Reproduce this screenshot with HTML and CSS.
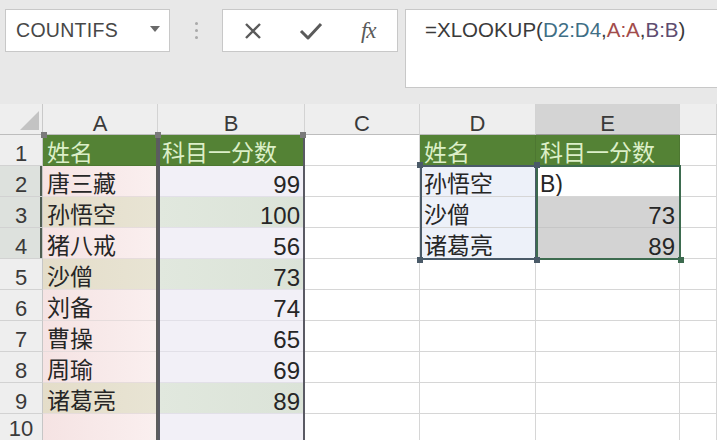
FILE: index.html
```html
<!DOCTYPE html>
<html lang="zh-CN">
<head>
<meta charset="utf-8">
<title>XLOOKUP</title>
<link rel="stylesheet" href="styles.css">
</head>
<body>
<div class="app">
  <div class="toolbar">
    <div class="namebox"><span class="nb-text">COUNTIFS</span><span class="caret"></span></div>
    <div class="dots"><i></i><i></i><i></i></div>
    <div class="btns">
      <div class="btn">
        <svg width="20" height="16" viewBox="0 0 20 16"><path d="M3 1 L17 15 M17 1 L3 15" stroke="#5a5a5a" stroke-width="2.4" fill="none"/></svg>
      </div>
      <div class="btn">
        <svg width="24" height="18" viewBox="0 0 24 18"><path d="M2 9 L9 16 L22 2" stroke="#5a5a5a" stroke-width="3" fill="none" stroke-linejoin="round"/></svg>
      </div>
      <div class="btn fx"><span class="fxt">fx</span></div>
    </div>
    <div class="formula">=XLOOKUP(<span class="r-d">D2:D4</span>,<span class="r-a">A:A</span>,<span class="r-b">B:B</span>)</div>
  </div>

  <div class="sheet">
    <div class="grid">
      <div class="c corner"><div class="tri"></div></div>
      <div class="c ch">A</div>
      <div class="c ch">B</div>
      <div class="c ch">C</div>
      <div class="c ch">D</div>
      <div class="c ch sel">E</div>
      <div class="c ch"></div>

      <div class="c rh">1</div>
      <div class="c hd">姓名</div>
      <div class="c hd">科目一分数</div>
      <div class="c"></div>
      <div class="c hd">姓名</div>
      <div class="c hd">科目一分数</div>
      <div class="c"></div>

      <div class="c rh rsel">2</div>
      <div class="c pk">唐三藏</div>
      <div class="c lv num">99</div>
      <div class="c"></div>
      <div class="c bl">孙悟空</div>
      <div class="c edit">B)</div>
      <div class="c"></div>

      <div class="c rh rsel">3</div>
      <div class="c tn">孙悟空</div>
      <div class="c gn num">100</div>
      <div class="c"></div>
      <div class="c bl">沙僧</div>
      <div class="c gy num">73</div>
      <div class="c"></div>

      <div class="c rh rsel">4</div>
      <div class="c pk">猪八戒</div>
      <div class="c lv num">56</div>
      <div class="c"></div>
      <div class="c bl">诸葛亮</div>
      <div class="c gy num">89</div>
      <div class="c"></div>

      <div class="c rh">5</div>
      <div class="c tn">沙僧</div>
      <div class="c gn num">73</div>
      <div class="c"></div>
      <div class="c"></div>
      <div class="c"></div>
      <div class="c"></div>

      <div class="c rh">6</div>
      <div class="c pk">刘备</div>
      <div class="c lv num">74</div>
      <div class="c"></div>
      <div class="c"></div>
      <div class="c"></div>
      <div class="c"></div>

      <div class="c rh">7</div>
      <div class="c pk">曹操</div>
      <div class="c lv num">65</div>
      <div class="c"></div>
      <div class="c"></div>
      <div class="c"></div>
      <div class="c"></div>

      <div class="c rh">8</div>
      <div class="c pk">周瑜</div>
      <div class="c lv num">69</div>
      <div class="c"></div>
      <div class="c"></div>
      <div class="c"></div>
      <div class="c"></div>

      <div class="c rh">9</div>
      <div class="c tn">诸葛亮</div>
      <div class="c gn num">89</div>
      <div class="c"></div>
      <div class="c"></div>
      <div class="c"></div>
      <div class="c"></div>

      <div class="c rh last">10</div>
      <div class="c pk"></div>
      <div class="c lv"></div>
      <div class="c"></div>
      <div class="c"></div>
      <div class="c"></div>
      <div class="c"></div>
    </div>

    <div class="rng rng-a"></div>
    <div class="rng rng-b"></div>
    <div class="rng rng-d"></div>
    <div class="rng rng-e"></div>

    <div class="hdl hdl-g h-a1"></div>
    <div class="hdl hdl-g h-a2"></div>
    <div class="hdl hdl-g h-b2"></div>
    <div class="hdl hdl-d h-d1"></div>
    <div class="hdl hdl-d h-d2"></div>
    <div class="hdl hdl-d h-d3"></div>
    <div class="hdl hdl-d h-d4"></div>
    <div class="hdl hdl-e h-e1"></div>
  </div>
</div>
</body>
</html>
```

FILE: styles.css
```css
* { box-sizing: border-box; }
html, body { margin: 0; padding: 0; }
body {
  width: 717px;
  height: 440px;
  overflow: hidden;
  background: #e8e8e8;
  font-family: "Liberation Sans", "Noto Sans CJK SC", sans-serif;
}
.app { width: 717px; height: 440px; overflow: hidden; }

/* toolbar */
.toolbar {
  height: 104px;
  display: flex;
  align-items: flex-start;
  padding: 9px 0 0 5px;
  background: #e8e8e8;
}
.namebox {
  width: 165px;
  height: 43px;
  background: #fff;
  border: 1px solid #c8c8c8;
  display: flex;
  align-items: center;
  justify-content: space-between;
  padding: 0 9px 0 10px;
}
.nb-text { font-size: 19.5px; color: #474747; letter-spacing: 0.3px; }
.caret {
  width: 0; height: 0;
  border-left: 5px solid transparent;
  border-right: 5px solid transparent;
  border-top: 6px solid #6a6a6a;
  margin-bottom: 3px;
}
.dots {
  width: 52px;
  height: 43px;
  display: flex;
  flex-direction: column;
  align-items: center;
  justify-content: center;
  gap: 4px;
}
.dots i { display: block; width: 3px; height: 3px; border-radius: 50%; background: #a9a9a9; }
.btns {
  width: 176px;
  height: 43px;
  background: #fff;
  border: 1px solid #c8c8c8;
  display: flex;
  padding-left: 1px;
}
.btn { width: 58px; display: flex; align-items: center; justify-content: center; }
.fx { font-family: "Liberation Serif", serif; font-style: italic; color: #5a5a5a; padding-top: 1px; }
.fxt { font-size: 23px; letter-spacing: -1px; }
.formula {
  flex: 1;
  margin-left: 7px;
  height: 79px;
  background: #fff;
  border: 1px solid #c8c8c8;
  border-right: none;
  padding: 7px 0 0 19px;
  font-size: 20.5px;
  line-height: 26px;
  color: #3a3a3a;
  white-space: nowrap;
}
.r-d { color: #3f6f86; }
.r-a { color: #a24c4c; }
.r-b { color: #5e4d70; }

/* sheet */
.sheet { position: relative; height: 336px; overflow: hidden; background: #fff; }
.grid {
  display: grid;
  grid-template-columns: 43px 115px 147px 115px 116px 144px 37px;
  grid-auto-rows: 31px;
}
.c {
  border-right: 1px solid #d6d6d6;
  border-bottom: 1px solid #d6d6d6;
  font-size: 23px;
  line-height: 31px;
  padding: 3px 4px 0 4px;
  color: #262626;
  white-space: nowrap;
  overflow: hidden;
  background: #fff;
}
.num { text-align: right; font-size: 24px; }
.corner {
  background: #eeeeee;
  border-right: 1px solid #c9c9c9;
  border-bottom: 1px solid #bdbdbd;
  display: flex;
  justify-content: flex-end;
  align-items: flex-end;
  padding: 0 3px 4px 0;
}
.tri { width: 19px; height: 19px; background: #c3c3c3; clip-path: polygon(100% 0, 100% 100%, 0 100%); }
.ch {
  background: #eeeeee;
  border-right: 1px solid #d3d3d3;
  border-bottom: 1px solid #bdbdbd;
  text-align: center;
  font-size: 22px;
  color: #3a3a3a;
  padding-top: 4px;
}
.ch.sel { background: #d4d4d4; border-bottom-color: #9a9a9a; }
.rh {
  background: #eeeeee;
  border-right: 1px solid #c6c6c6;
  border-bottom: 1px solid #d2d2d2;
  text-align: center;
  font-size: 22px;
  color: #3a3a3a;
  padding: 3px 0 0 0;
}
.rh.last { line-height: 26px; padding-top: 2px; }
.rh.rsel { background: #dde1dd; box-shadow: inset -2px 0 0 #4f5d52; }
.hd {
  background: #548235;
  color: #dcefc8;
  border-right-color: #4d7731;
  border-bottom-color: #4d7731;
}
.pk { background: linear-gradient(to right, #f5e3e3, #faefef); border-bottom-color: #e6dcdc; }
.tn { background: linear-gradient(to right, #e4ddc9, #e8e4d4); border-bottom-color: #e6dcdc; }
.lv { background: #f2f0f7; border-bottom-color: #e2e0e8; }
.gn { background: linear-gradient(to right, #e1e8de, #dbe3d8); border-bottom-color: #e2e0e8; }
.bl { background: #edf1f9; }
.gy { background: #d3d3d3; border-bottom-color: #c6c6c6; }
.edit { color: #262626; }

/* reference range outlines (overlay) */
.rng { position: absolute; pointer-events: none; }
.rng-a { left: 43px; top: 31px; width: 115px; height: 305px; border-right: 2px solid #5c5c5c; }
.rng-b { left: 158px; top: 31px; width: 147px; height: 305px; border-left: 2px solid #5a5a64; border-right: 2px solid #5a5a64; }
.rng-d { left: 420px; top: 61px; width: 117px; height: 95px; border: 2px solid #4a5a68; }
.rng-e { left: 536px; top: 61px; width: 145px; height: 95px; border: 2px solid #3d6b4f; }

.hdl { position: absolute; width: 6px; height: 6px; }
.hdl-g { background: #7a7a7a; top: 28px; }
.h-a1 { left: 41px; }
.h-a2 { left: 155px; }
.h-b2 { left: 300px; }
.hdl-d { background: #4a5a68; }
.h-d1 { left: 417px; top: 58px; }
.h-d2 { left: 534px; top: 58px; }
.h-d3 { left: 417px; top: 153px; }
.h-d4 { left: 534px; top: 153px; }
.hdl-e { background: #3d6b4f; }
.h-e1 { left: 678px; top: 153px; }
```
